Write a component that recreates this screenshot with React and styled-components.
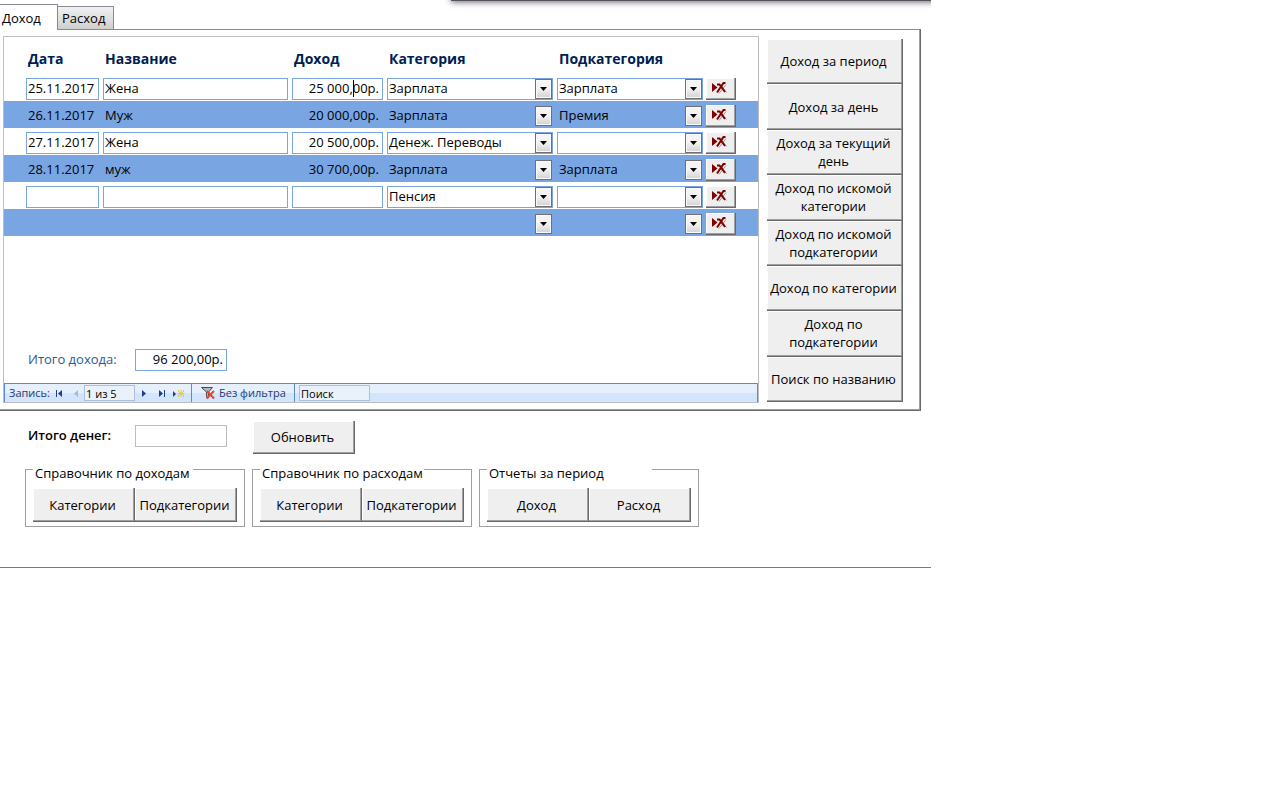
import React, { useState } from 'react';
import styled, { createGlobalStyle } from 'styled-components';

const GlobalStyle = createGlobalStyle`
  * { box-sizing: border-box; }
  body {
    margin: 0;
    background: #fff;
  }
  body, button, input, select {
    font-family: 'Open Sans', 'Noto Sans', sans-serif;
    font-size: 13px;
    line-height: 18px;
    color: #000;
  }
`

//Styled
const Form = styled.main`
  position: relative;
  max-width: 931px;
  padding: 4px 0 40px;
  border-bottom: 1px solid #5b7fae;
  overflow: hidden;
`
const TopShadow = styled.div`
  position: absolute;
  top: -7px;
  left: 451px;
  right: -8px;
  height: 8px;
  background: #55535c;
  box-shadow: 0 1px 6px #6d5f70;
`
const Tabs = styled.div`
  display: flex;
  align-items: flex-end;
  height: 25px;
`
const Tab = styled.button`
  position: relative;
  width: ${p => p.$active ? '58px' : '56px'};
  height: ${p => p.$active ? '26px' : '23px'};
  margin-bottom: ${p => p.$active ? '-1px' : '0'};
  z-index: ${p => p.$active ? 1 : 0};
  padding: 0 0 0 ${p => p.$active ? '2px' : '4px'};
  border: solid #8a8a94;
  border-width: 1px 1px 0 0;
  background: ${p => p.$active ? '#fff' : 'linear-gradient(#f1f1f1, #cfcfcf)'};
  text-align: left;
`
const TabPage = styled.section`
  display: flex;
  gap: 8px;
  max-width: 921px;
  padding: 6px 17px 7px 3px;
  border: solid #696969;
  border-width: 1px 1px 1px 0;
  border-top-color: #8a8a94;
  box-shadow: inset -1px -1px #a0a0a0;
`
const Subform = styled.div`
  flex: 1;
  display: flex;
  flex-direction: column;
  border: 1px solid #bdbdbd;
`
const Records = styled.div`
  flex: 1;
  min-height: 312px;
`
const Table = styled.table`
  width: 100%;
  table-layout: fixed;
  border-collapse: collapse;
`
const Head = styled.th`
  width: ${p => p.$w};
  height: 37px;
  padding: 7px 4px 0;
  text-align: left;
  font-size: 14px;
  color: #002050;
  &:first-child { padding-left: 24px; }
`
const Row = styled.tr`
  background: ${p => p.$alt ? '#79a6e2' : '#fff'};
`
const Cell = styled.td`
  height: 27px;
  padding: 4px 2px 1px;
  &:first-child { padding-left: 22px; }
  &:last-child { padding-left: 1px; }
`
const Field = styled.div`
  position: relative;
  display: flex;
`
const Input = styled.input`
  width: ${p => p.$w || '100%'};
  height: 22px;
  padding: 0 3px 2px 1px;
  border: 1px solid ${p => p.$alt ? 'transparent' : p.$muted ? '#bdbdbd' : '#79a6e2'};
  background: transparent;
  text-align: ${p => p.$right ? 'right' : 'left'};
  outline: none;
`
const Select = styled.select`
  width: 100%;
  height: 22px;
  padding: 0 19px 2px 1px;
  border: 1px solid ${p => p.$alt ? 'transparent' : '#79a6e2'};
  border-radius: 0;
  background: transparent;
  appearance: none;
  outline: none;
`
const Arrow = styled.span`
  position: absolute;
  top: 1px;
  right: 1px;
  width: 17px;
  height: 20px;
  display: grid;
  place-items: center;
  border: 1px solid #707070;
  background: linear-gradient(#f4f4f4 45%, #d2d2d2);
  box-shadow: inset 0 0 0 1px #fafafa;
  pointer-events: none;
`
const Caret = styled.span`
  position: absolute;
  top: 2px;
  right: 29px;
  width: 1px;
  height: 17px;
  background: #000;
`
const Button = styled.button`
  min-width: 0;
  padding: 0 3px 0 1px;
  border: solid #696969;
  border-width: 0 1px 1px 0;
  background: #efefef;
  box-shadow: inset -1px -1px #a0a0a0, inset 1px 1px #fff;
`
const DeleteButton = styled(Button)`
  display: grid;
  place-items: center;
  width: 30px;
  height: 22px;
  padding-bottom: 2px;
`
const RefreshButton = styled(Button)`
  width: 102px;
  height: 33px;
  margin: 0 0 -3px 26px;
`
const Side = styled.nav`
  display: grid;
  grid-auto-rows: 1fr;
  width: 136px;
  padding: 3px 0 1px;
`
const TotalRow = styled.div`
  display: flex;
  align-items: center;
  padding-left: ${p => p.$inner ? '24px' : '28px'};
  padding-bottom: ${p => p.$inner ? '12px' : '0'};
`
const TotalLabel = styled.label`
  width: 107px;
  padding-bottom: 2px;
  font-weight: ${p => p.$strong ? 600 : 400};
  color: ${p => p.$strong ? '#000' : '#2b5797'};
`
const NavBar = styled.div`
  display: flex;
  align-items: center;
  height: 19px;
  padding-left: 4px;
  border: solid #5b8bd0;
  border-width: 1px 1px 0;
  background: linear-gradient(#e6f0fd 50%, #d3e5fc 50%);
  font-size: 11px;
  color: #1e3c70;
`
const NavLabel = styled.label`
  width: 42px;
`
const NavButton = styled.button`
  display: grid;
  place-items: center;
  width: ${p => p.$w || '17px'};
  height: 18px;
  padding: 0;
  border: 0;
  background: transparent;
`
const NavInput = styled.input`
  width: ${p => p.$w};
  height: 16px;
  padding: 0 1px;
  border: 1px solid #a9c1de;
  background: #e9f1fb;
  font-size: 11px;
  line-height: 14px;
  outline: none;
`
const FilterButton = styled.button`
  display: flex;
  align-items: center;
  gap: 3px;
  height: 18px;
  width: 104px;
  margin: 0 4px;
  padding: 0 0 0 9px;
  border: solid #5b8bd0;
  border-width: 0 1px;
  background: transparent;
  font-size: 11px;
  color: #1e3c70;
  white-space: nowrap;
`
const Footer = styled.section`
  padding-top: 10px;
`
const Groups = styled.div`
  display: flex;
  gap: 7px;
  padding: 5px 0 0 25px;
`
const Group = styled.fieldset`
  display: flex;
  width: 220px;
  min-width: 0;
  margin: 0;
  padding: 6px 7px 4px;
  border: 1px solid #a0a0a0;
`
const Legend = styled.legend`
  width: ${p => p.$w};
  padding: 8px 2px 0;
  white-space: nowrap;
`
const GroupButton = styled(Button)`
  width: 102px;
  height: 34px;
`

const rows = [
  ['25.11.2017', 'Жена', '25 000,00р.', 'Зарплата', 'Зарплата'],
  ['26.11.2017', 'Муж', '20 000,00р.', 'Зарплата', 'Премия'],
  ['27.11.2017', 'Жена', '20 500,00р.', 'Денеж. Переводы', ''],
  ['28.11.2017', 'муж', '30 700,00р.', 'Зарплата', 'Зарплата'],
  ['', '', '', 'Пенсия', ''],
  ['', '', '', '', ''],
];

const reports = [
  'Доход за период',
  'Доход за день',
  'Доход за текущий день',
  'Доход по искомой категории',
  'Доход по искомой подкатегории',
  'Доход по категории',
  'Доход по подкатегории',
  'Поиск по названию',
];

const groups = [
  { title: 'Справочник по доходам', width: '160px', buttons: ['Категории', 'Подкатегории'] },
  { title: 'Справочник по расходам', width: '164px', buttons: ['Категории', 'Подкатегории'] },
  { title: 'Отчеты за период', width: '165px', buttons: ['Доход', 'Расход'] },
];

const DeleteIcon = () => (
  <svg width="15" height="12" viewBox="0 0 15 12" aria-hidden="true">
    <path d="M7 11.5l7-9M9 3l5.500 7.500" stroke="#9a9a9a" fill="none" />
    <path d="M0 1v9l5.500-4.500z" fill="#800000" />
    <path d="M5 2.500h2.500l5.500 7.500" stroke="#800000" strokeWidth="2" fill="none" />
    <path d="M13.500 1h-2L5 10.500" stroke="#800000" strokeWidth="2" fill="none" />
  </svg>
);

const FilterIcon = () => (
  <svg width="15" height="14" viewBox="0 0 15 14" aria-hidden="true">
    <path d="M.5 1.500h11L7.500 6v6l-2-1.500V6z" fill="#b9b9b9" stroke="#4a4a4a" />
    <path d="M6 5l7 7.500M13 5l-7.500 7.500" stroke="#e8452c" strokeWidth="2" />
  </svg>
);

const NavIcon = ({ kind }) => (
  <svg width="12" height="9" viewBox="0 0 12 9" aria-hidden="true">
    {kind === 'first' && <path d="M2 1h1v7H2zM8 1v7L4 4.500z" fill="#1c3f94" />}
    {kind === 'prev' && <path d="M8 1v7L4 4.500z" fill="#a3bbdd" />}
    {kind === 'next' && <path d="M4 1v7l4-3.500z" fill="#1c3f94" />}
    {kind === 'last' && <path d="M3 1v7l4-3.500zM8 1h1v7H8z" fill="#1c3f94" />}
    {kind === 'new' && (
      <>
        <path d="M0 2v6l3-3z" fill="#1c3f94" />
        <path d="M5 2l6 5M11 2L5 7M8 1v7M4.500 4.500h7" stroke="#e8c44c" />
        <path d="M5 1h1v1H5zM10 1h1v1h-1zM5 7h1v1H5zM10 7h1v1h-1z" fill="#e8c44c" />
      </>
    )}
  </svg>
);

const Combo = ({ value, label, alt }) => (
  <Field>
    <Select defaultValue={value} aria-label={label} $alt={alt}>
      <option>{value}</option>
    </Select>
    <Arrow>
      <svg width="7" height="4" viewBox="0 0 7 4"><path d="M0 0h7L3.500 4z" /></svg>
    </Arrow>
  </Field>
);

const RecordRow = ({ row, index }) => {
  const alt = index % 2 === 1;
  const [date, name, income, category, sub] = row;

  return (
    <Row $alt={alt}>
      <Cell><Field><Input defaultValue={date} aria-label="Дата" $alt={alt} /></Field></Cell>
      <Cell><Field><Input defaultValue={name} aria-label="Название" $alt={alt} /></Field></Cell>
      <Cell>
        <Field>
          <Input defaultValue={income} aria-label="Доход" $alt={alt} $right />
          {index === 0 && <Caret />}
        </Field>
      </Cell>
      <Cell><Combo value={category} label="Категория" alt={alt} /></Cell>
      <Cell><Combo value={sub} label="Подкатегория" alt={alt} /></Cell>
      <Cell><DeleteButton aria-label="Удалить"><DeleteIcon /></DeleteButton></Cell>
    </Row>
  );
};

const App = () => {
  const [tab, setTab] = useState('Доход');

  return (
    <>
      <GlobalStyle />
      <Form>
        <TopShadow />
        <Tabs role="tablist">
          {['Доход', 'Расход'].map(name => (
            <Tab key={name} role="tab" aria-selected={tab === name} $active={tab === name} onClick={() => setTab(name)}>
              {name}
            </Tab>
          ))}
        </Tabs>
        <TabPage>
          <Subform>
            <Records>
              <Table>
                <thead>
                  <tr>
                    <Head $w="97px">Дата</Head>
                    <Head $w="189px">Название</Head>
                    <Head $w="95px">Доход</Head>
                    <Head $w="170px">Категория</Head>
                    <Head $w="150px">Подкатегория</Head>
                    <Head />
                  </tr>
                </thead>
                <tbody>
                  {rows.map((row, i) => <RecordRow key={i} row={row} index={i} />)}
                </tbody>
              </Table>
            </Records>
            <TotalRow $inner>
              <TotalLabel htmlFor="income-total">Итого дохода:</TotalLabel>
              <Input id="income-total" $w="92px" $right readOnly value="96 200,00р." />
            </TotalRow>
            <NavBar>
              <NavLabel htmlFor="record">Запись:</NavLabel>
              <NavButton aria-label="Первая"><NavIcon kind="first" /></NavButton>
              <NavButton aria-label="Предыдущая" $w="16px"><NavIcon kind="prev" /></NavButton>
              <NavInput id="record" $w="51px" defaultValue="1 из 5" />
              <NavButton aria-label="Следующая" $w="18px"><NavIcon kind="next" /></NavButton>
              <NavButton aria-label="Последняя"><NavIcon kind="last" /></NavButton>
              <NavButton aria-label="Новая"><NavIcon kind="new" /></NavButton>
              <FilterButton><FilterIcon />Без фильтра</FilterButton>
              <NavInput aria-label="Поиск" $w="71px" defaultValue="Поиск" />
            </NavBar>
          </Subform>
          <Side>
            {reports.map(report => <Button key={report}>{report}</Button>)}
          </Side>
        </TabPage>
        <Footer>
          <TotalRow>
            <TotalLabel htmlFor="money-total" $strong>Итого денег:</TotalLabel>
            <Input id="money-total" $w="92px" $muted $right />
            <RefreshButton>Обновить</RefreshButton>
          </TotalRow>
          <Groups>
            {groups.map(group => (
              <Group key={group.title}>
                <Legend $w={group.width}>{group.title}</Legend>
                {group.buttons.map(text => <GroupButton key={text}>{text}</GroupButton>)}
              </Group>
            ))}
          </Groups>
        </Footer>
      </Form>
    </>
  );
};

export default App;
